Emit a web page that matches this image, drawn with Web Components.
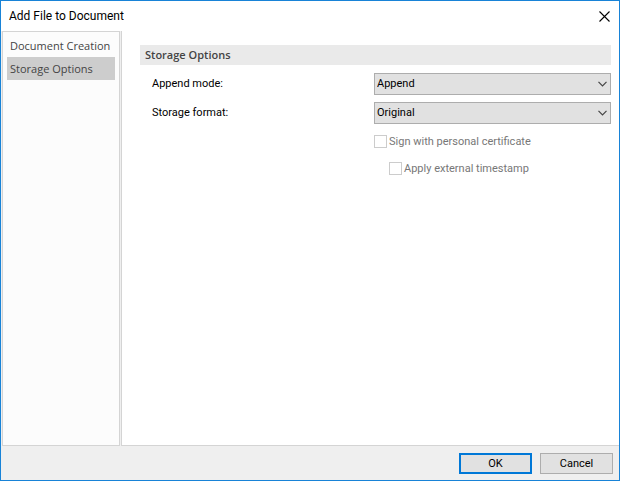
<!DOCTYPE html>
<html lang="en">
<head>
<meta charset="utf-8">
<title>Add File to Document</title>
<style>
html, body { margin: 0; height: 100%; }
body { font: 11px/16px Roboto, "Liberation Sans", sans-serif; color: #000; }
</style>
</head>
<body>
<dialog-window heading="Add File to Document">
  <side-nav slot="nav">
    <nav-item>Document Creation</nav-item>
    <nav-item selected>Storage Options</nav-item>
  </side-nav>
  <option-section heading="Storage Options">
    <select-row label="Append mode:" value="Append"></select-row>
    <select-row label="Storage format:" value="Original"></select-row>
    <check-row label="Sign with personal certificate"></check-row>
    <check-row label="Apply external timestamp" nested></check-row>
  </option-section>
  <dialog-button slot="actions" primary>OK</dialog-button>
  <dialog-button slot="actions">Cancel</dialog-button>
</dialog-window>
<script>
class BaseElement extends HTMLElement {
  connectedCallback() {
    if (this.shadowRoot) return;
    this.attachShadow({ mode: 'open' }).innerHTML =
      '<style>*{box-sizing:border-box}</style>' + this.render();
  }
  attr(name) { return this.getAttribute(name) || ''; }
}

customElements.define('dialog-window', class extends BaseElement {
  render() {
    return `
<style>
:host { display: flex; flex-direction: column; box-sizing: border-box; min-height: 100%; border: 1px solid #1883d7; background: #fff; }
header { display: flex; align-items: center; justify-content: space-between; height: 30px; padding: 0 7px 0 8px; }
h1 { margin: 0; font: 12px/16px Roboto, sans-serif; }
header button { display: flex; padding: 2px; border: 0; background: none; }
.body { display: flex; flex: 1; gap: 1px; padding-left: 1px; background: #efefef; }
main { flex: 1; min-width: 0; padding: 14px 8px 0 18px; border-left: 1px solid #d4d4d4; border-bottom: 1px solid #d4d4d4; background: #fff; }
footer { display: flex; justify-content: flex-end; gap: 8px; padding: 7px 6px 6px; background: #efefef; }
</style>
<header><h1>${this.attr('heading')}</h1>
<button aria-label="Close"><svg width="11" height="11" viewBox="0 0 11 11" fill="none" stroke="#000" stroke-width="1.1"><path d="M.5.5l10 10M10.5.5l-10 10"/></svg></button></header>
<div class="body"><slot name="nav"></slot><main><slot></slot></main></div>
<footer><slot name="actions"></slot></footer>`;
  }
});

customElements.define('side-nav', class extends BaseElement {
  render() {
    return `
<style>
:host { display: block; flex: none; box-sizing: border-box; width: 118px; padding: 2px 4px; border: 1px solid #d4d4d4; background: #fcfcfc; }
</style>
<nav><slot></slot></nav>`;
  }
});

customElements.define('nav-item', class extends BaseElement {
  render() {
    return `
<style>
:host { display: block; }
a { display: block; padding: 0 3px; font: 11px/23px "Open Sans", sans-serif; color: #444; text-decoration: none; white-space: nowrap; }
:host([selected]) a { background: #cdcdcd; }
</style>
<a href="#"><slot></slot></a>`;
  }
});

customElements.define('option-section', class extends BaseElement {
  render() {
    return `
<style>
:host { display: block; }
h2 { margin: 0 0 8px; padding: 0 5px; font: 600 11px/20px "Open Sans", sans-serif; color: #444; background: #eaeaea; }
.rows { display: grid; gap: 7px; padding-left: 12px; }
</style>
<h2>${this.attr('heading')}</h2>
<div class="rows"><slot></slot></div>`;
  }
});

customElements.define('select-row', class extends BaseElement {
  render() {
    return `
<style>
:host { display: grid; grid-template-columns: 222px 1fr; align-items: center; }
.field { display: grid; align-items: center; }
select { grid-area: 1 / 1; width: 100%; height: 22px; padding: 0 20px 0 2px; appearance: none; border: 1px solid #adadad; border-radius: 0; background: #e1e1e1; font: inherit; color: #000; }
svg { grid-area: 1 / 1; justify-self: end; margin-right: 4px; pointer-events: none; }
</style>
<label for="s">${this.attr('label')}</label>
<div class="field"><select id="s"><option>${this.attr('value')}</option></select>
<svg width="9" height="6" viewBox="0 0 9 6" fill="none" stroke="#444" stroke-width="1.2"><path d="M.5.8l4 4 4-4"/></svg></div>`;
  }
});

customElements.define('check-row', class extends BaseElement {
  render() {
    return `
<style>
:host { display: block; padding: 2px 0 1px 222px; line-height: 17px; }
:host([nested]) { padding-left: 237px; }
label { display: flex; align-items: center; gap: 2px; color: #777; }
input { appearance: none; width: 13px; height: 13px; margin: 0; border: 1px solid #ccc; background: #fff; }
</style>
<label><input type="checkbox" disabled>${this.attr('label')}</label>`;
  }
});

customElements.define('dialog-button', class extends BaseElement {
  render() {
    return `
<style>
:host { display: block; }
button { display: block; width: 73px; height: 21px; padding: 0; border: 1px solid #adadad; background: #e1e1e1; font: inherit; color: #000; }
:host([primary]) button { border: 2px solid #0078d7; }
</style>
<button><slot></slot></button>`;
  }
});
</script>
</body>
</html>
